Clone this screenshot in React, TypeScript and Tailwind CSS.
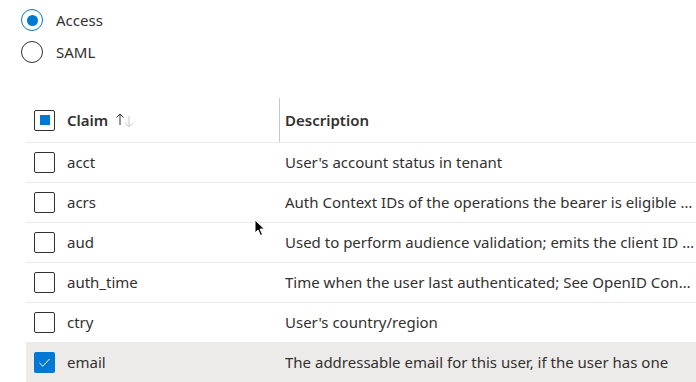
import React from "react";

type Claim = {
  name: string;
  description: string;
  checked?: boolean;
};

const claims: Claim[] = [
  { name: "acct", description: "User's account status in tenant" },
  { name: "acrs", description: "Auth Context IDs of the operations the bearer is eligible …" },
  { name: "aud", description: "Used to perform audience validation; emits the client ID …" },
  { name: "auth_time", description: "Time when the user last authenticated; See OpenID Con…" },
  { name: "ctry", description: "User's country/region" },
  { name: "email", description: "The addressable email for this user, if the user has one", checked: true },
];

export default function App() {
  return (
    <div
      className="relative w-[696px] h-[382px] overflow-hidden bg-white text-[#323130] text-[15px]"
      style={{ fontFamily: '"Noto Sans", "Open Sans", sans-serif' }}
    >
      {/* Token type */}
      <div className="flex flex-col pl-[21px] pt-[4px]">
        <Radio label="Access" checked />
        <Radio label="SAML" />
      </div>

      {/* Claims table */}
      <div className="ml-[26px] mt-[30px] w-[670px]">
        <div className="flex h-[45px] items-center border-b border-[#edebe9]">
          <div className="flex w-[253px] items-center gap-[12px] pl-[8px]">
            <Checkbox indeterminate />
            <span className="font-semibold">Claim</span>
            <SortIcon />
          </div>
          <div className="flex h-full items-center border-l border-[#c8c6c4] pl-[5px] font-semibold">
            Description
          </div>
        </div>

        {claims.map((c) => (
          <div
            key={c.name}
            className={
              c.checked
                ? "flex h-[39px] items-center bg-[#edebe9]"
                : "flex h-[40px] items-center border-b border-[#edebe9]"
            }
          >
            <div className="flex w-[259px] shrink-0 items-center gap-[12px] pl-[8px]">
              <Checkbox checked={c.checked} />
              <span>{c.name}</span>
            </div>
            <div className="w-[411px] truncate">{c.description}</div>
          </div>
        ))}
      </div>

      {/* mouse pointer */}
      <svg className="absolute left-[254px] top-[219px]" width="12" height="18" viewBox="0 0 12 18">
        <path d="M1 1 L1 14 L4 11 L6.5 16.5 L8.5 15.5 L6 10 L10.5 10 Z" fill="#000" stroke="#fff" strokeWidth="1" />
      </svg>
    </div>
  );
}

function Radio({ label, checked }: { label: string; checked?: boolean }) {
  return (
    <div className="flex h-[32px] items-center gap-[13px]">
      <span
        className={
          checked
            ? "flex h-[22px] w-[22px] items-center justify-center rounded-full border border-[#0078d4]"
            : "flex h-[22px] w-[22px] items-center justify-center rounded-full border border-[#323130]"
        }
      >
        {checked && <span className="h-[11px] w-[11px] rounded-full bg-[#0078d4]" />}
      </span>
      <span>{label}</span>
    </div>
  );
}

function Checkbox({ checked, indeterminate }: { checked?: boolean; indeterminate?: boolean }) {
  if (checked) {
    return (
      <span className="flex h-[21px] w-[21px] items-center justify-center rounded-[2px] bg-[#0078d4]">
        <svg width="13" height="13" viewBox="0 0 13 13">
          <path d="M1.5 7 L4.8 10.2 L11.5 3" fill="none" stroke="#fff" strokeWidth="1" />
        </svg>
      </span>
    );
  }
  return (
    <span className="flex h-[21px] w-[21px] items-center justify-center rounded-[2px] border border-[#323130]">
      {indeterminate && <span className="h-[10px] w-[10px] bg-[#0078d4]" />}
    </span>
  );
}

function SortIcon() {
  return (
    <svg width="22" height="18" viewBox="0 0 22 18" className="-ml-[5px]">
      <path d="M5 14 V3 M1.5 6.5 L5 3 L8.5 6.5" fill="none" stroke="#323130" strokeWidth="1" />
      <path d="M14 5 V16 M10.5 12.5 L14 16 L17.5 12.5" fill="none" stroke="#c8c6c4" strokeWidth="1" />
    </svg>
  );
}
